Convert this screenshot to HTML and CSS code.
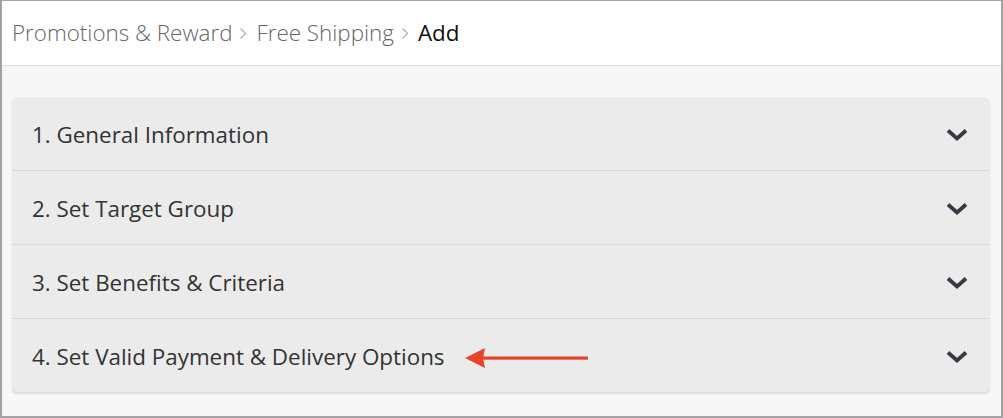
FILE: index.html
```html
<!DOCTYPE html>
<html lang="en">
<head>
    <title>Free Shipping - Add</title>
    <link rel="stylesheet" href="styles.css">
</head>
<body>
    <div class="frame">
        <header class="topbar">
            <a class="crumb" href="#">Promotions &amp; Reward</a>
            <svg class="sep" width="8" height="13" viewBox="0 0 8 13"><path d="M1.5 1.5 L6.5 6.5 L1.5 11.5" fill="none" stroke="#b0b0b0" stroke-width="1.3"/></svg>
            <a class="crumb" href="#">Free Shipping</a>
            <svg class="sep" width="8" height="13" viewBox="0 0 8 13"><path d="M1.5 1.5 L6.5 6.5 L1.5 11.5" fill="none" stroke="#b0b0b0" stroke-width="1.3"/></svg>
            <span class="crumb current">Add</span>
        </header>

        <div class="content">
            <div class="steps">
                <div class="step">
                    <span class="step-title">1. General Information</span>
                    <svg class="chevron" width="24" height="16" viewBox="0 0 24 16"><path d="M3 3.5 L12 11.5 L21 3.5" fill="none" stroke="#353a44" stroke-width="3.8"/></svg>
                </div>
                <div class="step">
                    <span class="step-title">2. Set Target Group</span>
                    <svg class="chevron" width="24" height="16" viewBox="0 0 24 16"><path d="M3 3.5 L12 11.5 L21 3.5" fill="none" stroke="#353a44" stroke-width="3.8"/></svg>
                </div>
                <div class="step">
                    <span class="step-title">3. Set Benefits &amp; Criteria</span>
                    <svg class="chevron" width="24" height="16" viewBox="0 0 24 16"><path d="M3 3.5 L12 11.5 L21 3.5" fill="none" stroke="#353a44" stroke-width="3.8"/></svg>
                </div>
                <div class="step">
                    <span class="step-title">4. Set Valid Payment &amp; Delivery Options</span>
                    <svg class="pointer" width="124" height="22" viewBox="0 0 124 22"><path d="M0 11 L20 1 L18 11 L20 21 Z" fill="#e8432b"/><rect x="16" y="9.5" width="107" height="3.2" fill="#e8432b"/></svg>
                    <svg class="chevron" width="24" height="16" viewBox="0 0 24 16"><path d="M3 3.5 L12 11.5 L21 3.5" fill="none" stroke="#353a44" stroke-width="3.8"/></svg>
                </div>
            </div>
        </div>
    </div>
</body>
</html>
```

FILE: styles.css
```css
body {
    margin: 0;
    padding: 0;
    font-family: "Open Sans", "Noto Sans", sans-serif;
    background-color: #ffffff;
}

.frame {
    box-sizing: border-box;
    width: 1003px;
    height: 418px;
    border: 2px solid #a3a3a3;
    border-top-width: 1px;
    background-color: #f7f7f7;
}

.topbar {
    box-sizing: border-box;
    height: 65px;
    background-color: #fff;
    border-bottom: 1px solid #dddddd;
    padding: 0 0 2px 10px;
    display: flex;
    align-items: center;
    font-size: 22.4px;
    font-weight: 300;
}

.crumb {
    color: #666;
    text-decoration: none;
}

.crumb.current {
    color: #111;
    font-weight: 400;
}

.sep {
    margin: 2px 9px 0 7px;
}

.content {
    padding: 31px 11px 0 10px;
}

.steps {
    background-color: #ebebeb;
    border-radius: 5px;
    box-shadow: 0 2px 2px rgba(0, 0, 0, 0.12);
}

.step {
    box-sizing: border-box;
    height: 74px;
    display: flex;
    align-items: center;
    padding: 0 21px 0 20px;
    border-bottom: 1px solid #d9d9d9;
    font-size: 22.4px;
    color: #333;
}

.step:last-child {
    border-bottom: none;
    height: 73px;
}

.step-title {
    margin-top: 1px;
}

.pointer {
    margin-left: 20px;
    margin-top: 5px;
}

.chevron {
    margin-left: auto;
    margin-top: 3px;
}
```
